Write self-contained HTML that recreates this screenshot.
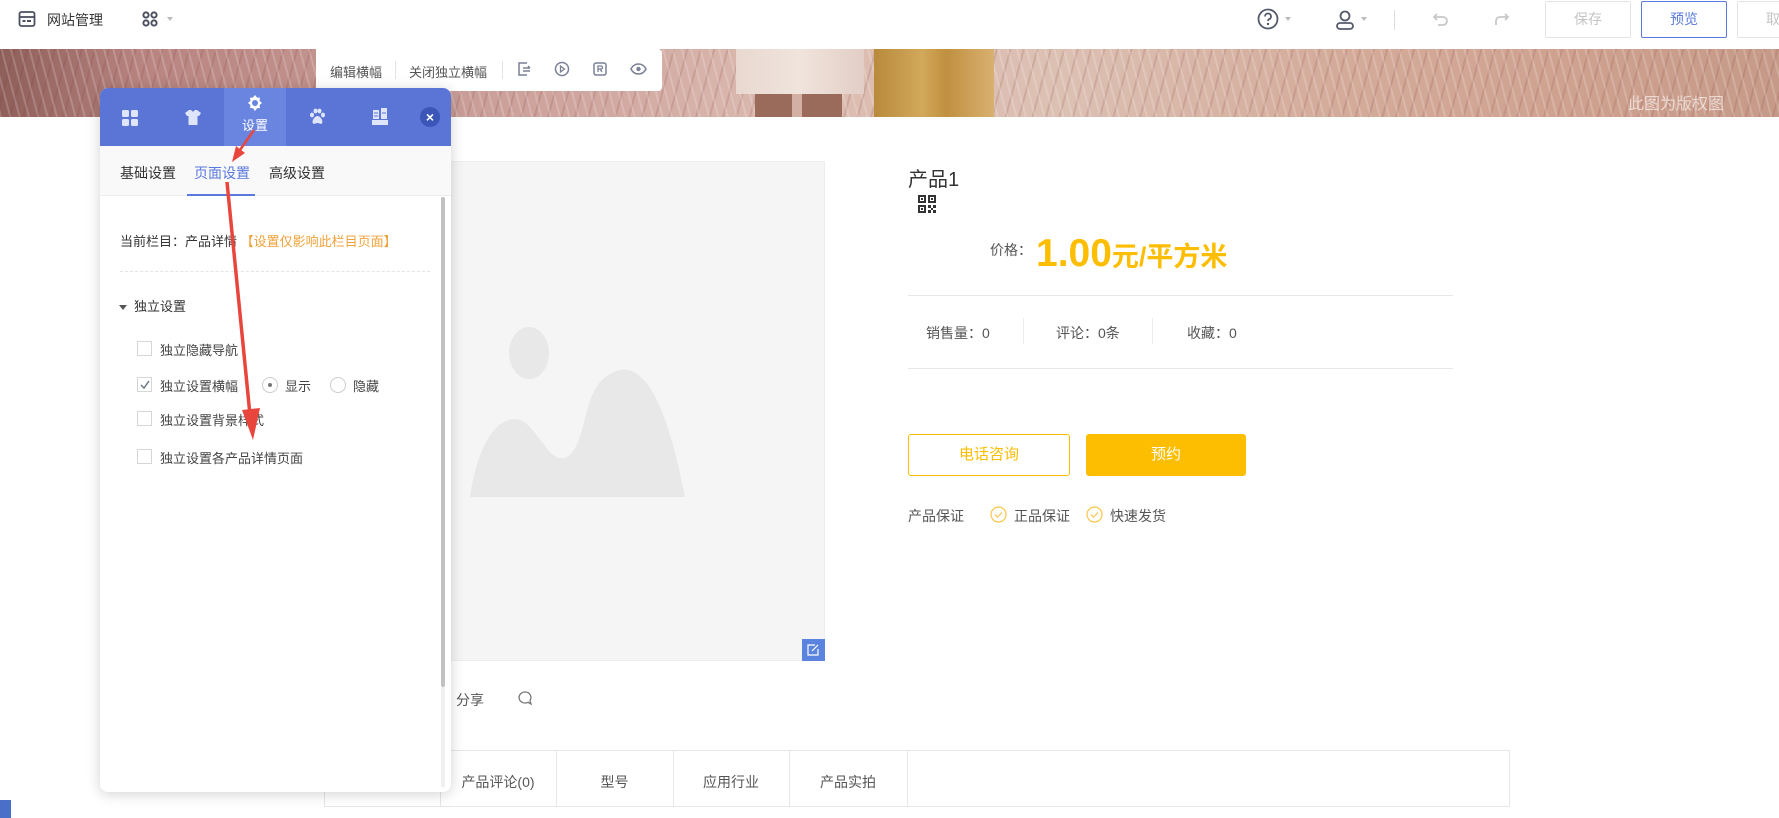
<!DOCTYPE html>
<html><head><meta charset="utf-8">
<style>
*{margin:0;padding:0;box-sizing:border-box}
body{width:1779px;height:818px;overflow:hidden;background:#fff;font-family:"Liberation Sans","Noto Sans CJK SC",sans-serif;color:#333;position:relative;font-size:14px}
.a{position:absolute;white-space:nowrap}
</style></head><body>
<!-- top bar -->
<div class="a" style="left:0;top:0;width:1779px;height:49px;background:#fff"></div>
<svg class="a" style="left:18px;top:10px" width="18" height="18" viewBox="0 0 18 18"><rect x="1.5" y="2" width="15" height="14" rx="2" fill="none" stroke="#4a5060" stroke-width="1.8"/><line x1="1.5" y1="7" x2="16.5" y2="7" stroke="#4a5060" stroke-width="1.8"/><rect x="4.5" y="10" width="3" height="2" fill="#4a5060"/><rect x="9" y="10" width="4" height="2" fill="#4a5060"/></svg>
<div class="a" style="left:47px;top:10px;font-size:14px;color:#333">网站管理</div>
<svg class="a" style="left:142px;top:10px" width="16" height="18" viewBox="0 0 16 18"><g fill="none" stroke="#4a5060" stroke-width="2"><circle cx="4" cy="5" r="2.6"/><circle cx="12" cy="5" r="2.6"/><circle cx="4" cy="13" r="2.6"/><circle cx="12" cy="13" r="2.6"/></g></svg>
<div class="a" style="left:167px;top:17px;border:3px solid transparent;border-top:4px solid #bbb"></div>

<svg class="a" style="left:1257px;top:8px" width="22" height="22" viewBox="0 0 22 22"><circle cx="11" cy="11" r="9.5" fill="none" stroke="#555b6b" stroke-width="1.8"/><path d="M8 8.5a3 3 0 1 1 4 2.8c-.8.4-1 .9-1 1.7" fill="none" stroke="#555b6b" stroke-width="1.8"/><circle cx="11" cy="16" r="1.2" fill="#555b6b"/></svg>
<div class="a" style="left:1285px;top:17px;border:3px solid transparent;border-top:4px solid #bbb"></div>
<svg class="a" style="left:1335px;top:9px" width="20" height="22" viewBox="0 0 20 22"><circle cx="10" cy="7" r="4.5" fill="none" stroke="#555b6b" stroke-width="1.8"/><rect x="2" y="14" width="16" height="6" rx="3" fill="none" stroke="#555b6b" stroke-width="1.8"/></svg>
<div class="a" style="left:1361px;top:17px;border:3px solid transparent;border-top:4px solid #bbb"></div>
<div class="a" style="left:1394px;top:10px;width:1px;height:20px;background:#ddd"></div>
<svg class="a" style="left:1432px;top:10px" width="18" height="18" viewBox="0 0 18 18"><path d="M5 4L2 7l3 3M2 7h9a4 4 0 0 1 0 8H6" fill="none" stroke="#c8c8c8" stroke-width="1.8"/></svg>
<svg class="a" style="left:1492px;top:10px" width="18" height="18" viewBox="0 0 18 18"><path d="M13 4l3 3-3 3M16 7H8a4 4 0 0 0-4 4v4" fill="none" stroke="#c8c8c8" stroke-width="1.8"/></svg>
<div class="a" style="left:1545px;top:1px;width:86px;height:37px;border:1px solid #e4e4e4;border-radius:2px;color:#c4c4c4;text-align:center;line-height:35px">保存</div>
<div class="a" style="left:1641px;top:1px;width:86px;height:37px;border:1px solid #5a79de;border-radius:2px;color:#5a79de;text-align:center;line-height:35px">预览</div>
<div class="a" style="left:1737px;top:1px;width:60px;height:37px;border:1px solid #e4e4e4;border-radius:2px;color:#c4c4c4;padding-left:28px;line-height:35px">取</div>

<!-- banner -->
<div class="a" style="left:0;top:49px;width:1779px;height:68px;background:linear-gradient(90deg,#8e5e58 0%,#b88480 8%,#c49590 20%,#d2aaa2 35%,#dcbcb0 45%,#dcc0b2 60%,#d4ab9a 75%,#cfa290 88%,#c69a88 100%)"></div>
<div class="a" style="left:0;top:49px;width:1779px;height:68px;background:repeating-linear-gradient(75deg,rgba(255,255,255,.18) 0 2px,transparent 2px 9px),repeating-linear-gradient(105deg,rgba(120,50,50,.15) 0 2px,transparent 2px 13px)"></div>
<div class="a" style="left:736px;top:49px;width:128px;height:45px;background:linear-gradient(90deg,#e8d8d0,#f0e4dc 50%,#e2cec6)"></div>
<div class="a" style="left:750px;top:94px;width:100px;height:23px;background:linear-gradient(90deg,transparent 0 5%,#9a6a5a 5% 42%,#d2b0a4 42% 52%,#9a6a5a 52% 92%,transparent 92%)"></div>
<div class="a" style="left:874px;top:49px;width:120px;height:68px;background:linear-gradient(90deg,#b88a3c,#d2a85a 40%,#c09040 60%,#d8b070)"></div>
<div class="a" style="left:1628px;top:90px;font-size:16px;color:rgba(255,255,255,.6)">此图为版权图</div>

<!-- banner toolbar -->
<div class="a" style="left:316px;top:49px;width:346px;height:42px;background:#fff;border-radius:0 4px 4px 4px"></div>
<div class="a" style="left:330px;top:62px;font-size:13px;color:#555">编辑横幅</div>
<div class="a" style="left:395px;top:61px;width:1px;height:18px;background:#e3e3e3"></div>
<div class="a" style="left:409px;top:62px;font-size:13px;color:#555">关闭独立横幅</div>
<div class="a" style="left:502px;top:61px;width:1px;height:18px;background:#e3e3e3"></div>
<svg class="a" style="left:516px;top:61px" width="16" height="16" viewBox="0 0 16 16"><path d="M11 2H3v12h8M7 7h7M7 10h7M12 5l2 2" fill="none" stroke="#7a8096" stroke-width="1.5"/></svg>
<svg class="a" style="left:554px;top:61px" width="16" height="16" viewBox="0 0 16 16"><circle cx="8" cy="8" r="6.5" fill="none" stroke="#7a8096" stroke-width="1.5"/><path d="M6.5 5v6l4-3z" fill="none" stroke="#7a8096" stroke-width="1.3"/></svg>
<svg class="a" style="left:592px;top:61px" width="16" height="16" viewBox="0 0 16 16"><rect x="2" y="2" width="12" height="12" rx="2" fill="none" stroke="#7a8096" stroke-width="1.5"/><path d="M6 11V5h3a1.5 1.5 0 0 1 0 3H6M8 8l2 3" fill="none" stroke="#7a8096" stroke-width="1.3"/></svg>
<svg class="a" style="left:630px;top:61px" width="17" height="16" viewBox="0 0 17 16"><path d="M1 8c2-4 4.5-5 7.5-5s5.5 1 7.5 5c-2 4-4.5 5-7.5 5S3 12 1 8z" fill="none" stroke="#7a8096" stroke-width="1.5"/><circle cx="8.5" cy="8" r="2.2" fill="#7a8096"/></svg>

<!-- main image placeholder -->
<div class="a" style="left:324px;top:161px;width:501px;height:500px;background:#f5f5f5;border:1px solid #eee"></div>
<svg class="a" style="left:460px;top:320px" width="240" height="180" viewBox="0 0 240 180"><ellipse cx="69" cy="33" rx="20" ry="26" fill="#e8e8e8"/><path d="M10 177C20 110 45 95 60 100 80 108 90 150 110 135 130 115 120 60 160 50 190 45 210 100 225 177Z" fill="#e8e8e8"/></svg>
<div class="a" style="left:802px;top:639px;width:23px;height:22px;background:#5b84e0"></div>
<svg class="a" style="left:806px;top:643px" width="14" height="14" viewBox="0 0 14 14"><path d="M9 2H2v10h10V6M6 8l6-6" fill="none" stroke="#fff" stroke-width="1.2"/></svg>
<div class="a" style="left:456px;top:690px;font-size:14px;color:#555">分享</div>
<svg class="a" style="left:517px;top:690px" width="18" height="17" viewBox="0 0 18 17"><path d="M8 2a6 5.5 0 1 0 3 10.3L14 14l-1-3.5A5.5 5.5 0 0 0 8 2z" fill="none" stroke="#777" stroke-width="1.3"/></svg>

<!-- table -->
<div class="a" style="left:324px;top:750px;width:1186px;height:57px;border:1px solid #e6e6e6"></div>
<div class="a" style="left:440px;top:750px;width:1px;height:57px;background:#e6e6e6"></div>
<div class="a" style="left:556px;top:750px;width:1px;height:57px;background:#e6e6e6"></div>
<div class="a" style="left:673px;top:750px;width:1px;height:57px;background:#e6e6e6"></div>
<div class="a" style="left:789px;top:750px;width:1px;height:57px;background:#e6e6e6"></div>
<div class="a" style="left:907px;top:750px;width:1px;height:57px;background:#e6e6e6"></div>
<div class="a" style="left:440px;top:772px;width:116px;text-align:center;color:#555">产品评论(0)</div>
<div class="a" style="left:556px;top:772px;width:117px;text-align:center;color:#555">型号</div>
<div class="a" style="left:673px;top:772px;width:116px;text-align:center;color:#555">应用行业</div>
<div class="a" style="left:789px;top:772px;width:118px;text-align:center;color:#555">产品实拍</div>

<!-- right info -->
<div class="a" style="left:908px;top:163px;font-size:20px;color:#333">产品1</div>
<svg class="a" style="left:918px;top:195px" width="18" height="18" viewBox="0 0 18 18"><g fill="#333"><path d="M0 0h8v8H0zM2 2v4h4V2zM10 0h8v8h-8zm2 2v4h4V2zM0 10h8v8H0zm2 2v4h4v-4zM10 10h3v3h-3zM15 10h3v3h-3zM13 13h2v2h-2zM10 15h3v3h-3zM15 15h3v3h-3z"/><rect x="3" y="3" width="2" height="2"/><rect x="13" y="3" width="2" height="2"/><rect x="3" y="13" width="2" height="2"/></g></svg>
<div class="a" style="left:990px;top:240px;font-size:14px;color:#555">价格：</div>
<div class="a" style="left:1036px;top:231px;font-weight:bold;color:#fdbd00;font-size:39px;line-height:46px">1.00<span style="font-size:27px">元/平方米</span></div>
<div class="a" style="left:908px;top:295px;width:545px;height:1px;background:#e8e8e8"></div>
<div class="a" style="left:926px;top:323px;color:#555">销售量：0</div>
<div class="a" style="left:1023px;top:318px;width:1px;height:26px;background:#eee"></div>
<div class="a" style="left:1056px;top:323px;color:#555">评论：0条</div>
<div class="a" style="left:1152px;top:318px;width:1px;height:26px;background:#eee"></div>
<div class="a" style="left:1187px;top:323px;color:#555">收藏：0</div>
<div class="a" style="left:908px;top:368px;width:545px;height:1px;background:#e8e8e8"></div>
<div class="a" style="left:908px;top:434px;width:162px;height:42px;border:1px solid #fdbd00;border-radius:3px;color:#fdbd00;font-size:15px;text-align:center;line-height:40px">电话咨询</div>
<div class="a" style="left:1086px;top:434px;width:160px;height:42px;background:#fdbd00;border-radius:3px;color:#fff;font-size:15px;text-align:center;line-height:42px">预约</div>
<div class="a" style="left:908px;top:506px;color:#555">产品保证</div>
<svg class="a" style="left:990px;top:506px" width="17" height="17" viewBox="0 0 17 17"><circle cx="8.5" cy="8.5" r="7.5" fill="none" stroke="#fdc54a" stroke-width="1.2"/><path d="M5 8.5l2.5 2.5 4.5-4.5" fill="none" stroke="#fdc54a" stroke-width="1.2"/></svg>
<div class="a" style="left:1014px;top:506px;color:#555">正品保证</div>
<svg class="a" style="left:1086px;top:506px" width="17" height="17" viewBox="0 0 17 17"><circle cx="8.5" cy="8.5" r="7.5" fill="none" stroke="#fdc54a" stroke-width="1.2"/><path d="M5 8.5l2.5 2.5 4.5-4.5" fill="none" stroke="#fdc54a" stroke-width="1.2"/></svg>
<div class="a" style="left:1110px;top:506px;color:#555">快速发货</div>

<!-- bottom-left blue mark -->
<div class="a" style="left:0;top:800px;width:11px;height:18px;background:#4a6fc8"></div>

<!-- panel -->
<div class="a" style="left:100px;top:88px;width:351px;height:704px;background:#fff;border-radius:8px;box-shadow:0 2px 14px rgba(0,0,0,.18);overflow:hidden">
  <div class="a" style="left:0;top:0;width:351px;height:58px;background:#5b75d6"></div>
  <div class="a" style="left:124px;top:0;width:62px;height:58px;background:#6a85e0"></div>
  <svg class="a" style="left:22px;top:22px" width="16" height="16" viewBox="0 0 16 16"><g fill="#dfe5fb"><rect width="7" height="7" rx="1.5"/><rect x="9" width="7" height="7" rx="1.5"/><rect y="9" width="7" height="7" rx="1.5"/><rect x="9" y="9" width="7" height="7" rx="1.5"/></g></svg>
  <svg class="a" style="left:85px;top:22px" width="16" height="15" viewBox="0 0 16 15"><path d="M0 3L4 0h2.5a1.5 1.5 0 0 0 3 0H12l4 3-2 3h-1.5v9h-9V6H2z" fill="#dfe5fb"/></svg>
  <svg class="a" style="left:147px;top:7px" width="16" height="16" viewBox="0 0 16 16"><path d="M8 0l2 2.5 3 .3-.5 3L15 8l-2.5 2 .5 3-3 .3L8 16l-2-2.7-3-.3.5-3L1 8l2.5-2.2-.5-3 3-.3z" fill="#fff"/><circle cx="8" cy="8" r="3" fill="#6a85e0"/></svg>
  <div class="a" style="left:124px;top:27px;width:62px;text-align:center;font-size:13px;color:#fff">设置</div>
  <svg class="a" style="left:209px;top:20px" width="17" height="17" viewBox="0 0 17 17"><g fill="#dfe5fb"><ellipse cx="3" cy="7" rx="2" ry="2.4"/><ellipse cx="6.5" cy="3" rx="2" ry="2.4"/><ellipse cx="10.5" cy="3" rx="2" ry="2.4"/><ellipse cx="14" cy="7" rx="2" ry="2.4"/><path d="M8.5 8c3 0 6 5 4.5 7.5-1.5 1-3-.5-4.5-.5S5.5 16.5 4 15.5C2.5 13 5.5 8 8.5 8z"/></g></svg>
  <svg class="a" style="left:272px;top:20px" width="16" height="18" viewBox="0 0 16 18"><g fill="#dfe5fb"><rect x="1" y="2" width="6" height="9"/><rect x="9" y="0" width="6" height="11"/><rect x="0" y="12" width="16" height="5"/></g><g stroke="#5b75d6" stroke-width="1"><line x1="2" y1="5" x2="6" y2="5"/><line x1="10" y1="5" x2="14" y2="5"/><line x1="2" y1="8" x2="6" y2="8"/></g></svg>
  <div class="a" style="left:320px;top:19px;width:20px;height:20px;border-radius:50%;background:#3b55b8;color:#fff;text-align:center;font-size:14px;font-weight:bold;line-height:20px">×</div>
  <div class="a" style="left:0;top:58px;width:351px;height:50px;background:#f9f9f9;border-bottom:1px solid #eee"></div>
  <div class="a" style="left:20px;top:75px;font-size:14px;color:#333">基础设置</div>
  <div class="a" style="left:94px;top:75px;font-size:14px;color:#5a79de">页面设置</div>
  <div class="a" style="left:169px;top:75px;font-size:14px;color:#333">高级设置</div>
  <div class="a" style="left:87px;top:106px;width:68px;height:2px;background:#5a79de"></div>
  <div class="a" style="left:341px;top:109px;width:4px;height:490px;background:#c1c1c1;border-radius:2px"></div>
  <div class="a" style="left:341px;top:599px;width:4px;height:100px;background:#f0f0f0"></div>
  <div class="a" style="left:20px;top:143px;font-size:13px;color:#333">当前栏目：产品详情 <span style="color:#f0a23a">【设置仅影响此栏目页面】</span></div>
  <div class="a" style="left:20px;top:183px;width:310px;border-top:1px dashed #e4e4e4"></div>
  <div class="a" style="left:19px;top:217px;border:4px solid transparent;border-top:5px solid #555"></div>
  <div class="a" style="left:34px;top:208px;font-size:13px;color:#333">独立设置</div>
  <div class="a" style="left:37px;top:253px;width:15px;height:15px;border:1px solid #d6d6d6"></div>
  <div class="a" style="left:60px;top:252px;font-size:13px;color:#444">独立隐藏导航</div>
  <div class="a" style="left:37px;top:289px;width:15px;height:15px;border:1px solid #d6d6d6"></div>
  <svg class="a" style="left:39px;top:291px" width="12" height="11" viewBox="0 0 12 11"><path d="M2 6l3 3 5-7" fill="none" stroke="#6a7385" stroke-width="1.4"/></svg>
  <div class="a" style="left:60px;top:288px;font-size:13px;color:#444">独立设置横幅</div>
  <div class="a" style="left:162px;top:289px;width:16px;height:16px;border:1px solid #ccc;border-radius:50%"></div>
  <div class="a" style="left:168px;top:295px;width:4px;height:4px;background:#777;border-radius:50%"></div>
  <div class="a" style="left:185px;top:288px;font-size:13px;color:#444">显示</div>
  <div class="a" style="left:230px;top:289px;width:16px;height:16px;border:1px solid #ccc;border-radius:50%"></div>
  <div class="a" style="left:253px;top:288px;font-size:13px;color:#444">隐藏</div>
  <div class="a" style="left:37px;top:323px;width:15px;height:15px;border:1px solid #d6d6d6"></div>
  <div class="a" style="left:60px;top:322px;font-size:13px;color:#444">独立设置背景样式</div>
  <div class="a" style="left:37px;top:361px;width:15px;height:15px;border:1px solid #d6d6d6"></div>
  <div class="a" style="left:60px;top:360px;font-size:13px;color:#444">独立设置各产品详情页面</div>
</div>

<!-- red arrows -->
<svg class="a" style="left:0;top:0" width="600" height="500" viewBox="0 0 600 500">
  <line x1="254" y1="130" x2="240" y2="150" stroke="#e8463c" stroke-width="2.5"/>
  <path d="M232 162l4-16 9 7z" fill="#e8463c"/>
  <line x1="227" y1="182" x2="250" y2="415" stroke="#e8463c" stroke-width="3.5"/>
  <path d="M253 440l-11-30 18-2z" fill="#e8463c"/>
</svg>
</body></html>
